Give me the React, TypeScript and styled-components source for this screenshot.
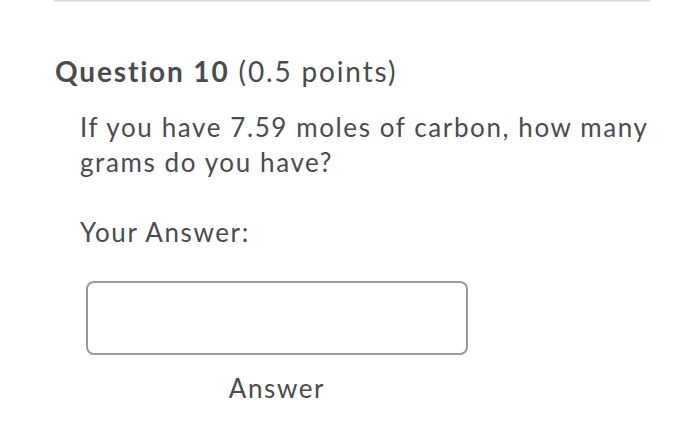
import React from 'react';
import styled, { createGlobalStyle } from 'styled-components';

const GlobalStyle = createGlobalStyle`
  html, body {
    margin: 0;
    padding: 0;
    background: #ffffff;
  }
  body {
    font-family: Lato, "Noto Sans", sans-serif;
    color: #494c4e;
  }
`;

const Page = styled.div`
  width: 700px;
  height: 432px;
  overflow: hidden;
  box-sizing: border-box;
`;

const TopRule = styled.div`
  margin: 0 50px 0 54px;
  height: 1px;
  background: #d6d6d6;
  box-shadow: 0 1px 1px rgba(0, 0, 0, 0.08);
`;

const QuestionTitle = styled.h2`
  margin: 52px 0 0 55px;
  font-size: 28px;
  line-height: 36px;
  font-weight: 400;
  letter-spacing: 1.85px;
`;

const Strong = styled.span`
  font-weight: 700;
`;

const Body = styled.div`
  padding-left: 80px;
  letter-spacing: 1.6px;
`;

const Prompt = styled.p`
  margin: 21px 0 0;
  font-size: 26px;
  line-height: 35px;
  max-width: 600px;
`;

const Label = styled.p`
  margin: 35px 0 0;
  font-size: 26px;
  line-height: 35px;
`;

const AnswerField = styled.div`
  display: flex;
  flex-direction: column;
  align-items: center;
  width: 382px;
  margin: 31px 0 0 6px;
`;

const Input = styled.input`
  box-sizing: border-box;
  width: 382px;
  height: 74px;
  border: 2px solid #9a9a9a;
  border-radius: 8px;
  background: #fff;
  font: inherit;
  outline: none;
`;

const Caption = styled.span`
  margin-top: 16px;
  font-size: 26px;
  line-height: 35px;
`;

const App: React.FC = () => {
  return (
    <Page>
      <GlobalStyle />
      <TopRule />
      <QuestionTitle>
        <Strong>Question 10</Strong> (0.5 points)
      </QuestionTitle>
      <Body>
        <Prompt>If you have 7.59 moles of carbon, how many grams do you have?</Prompt>
        <Label>Your Answer:</Label>
        <AnswerField>
          <Input aria-label="Answer" />
          <Caption>Answer</Caption>
        </AnswerField>
      </Body>
    </Page>
  );
};

export default App;
